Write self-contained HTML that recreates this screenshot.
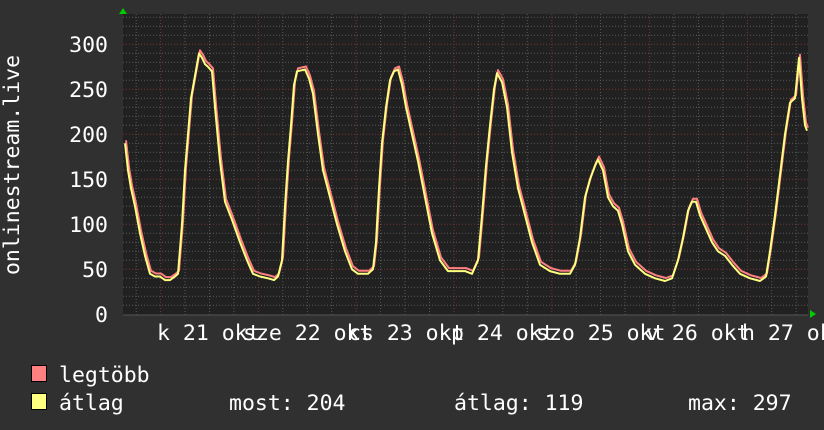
<!DOCTYPE html>
<html><head><meta charset="utf-8"><style>
html,body{margin:0;padding:0;background:#303030;width:824px;height:430px;overflow:hidden}
svg{display:block}
text{font-family:"DejaVu Sans Mono","Liberation Mono",monospace;fill:#fff;font-size:21.5px}
</style></head><body>
<svg width="824" height="430" viewBox="0 0 824 430">
<rect x="0" y="0" width="824" height="430" fill="#303030"/>
<rect x="123" y="14" width="685" height="301" fill="#212121"/>
<g stroke="#5a5a5a" stroke-width="1" stroke-dasharray="1,2">
<path d="M123 17.3H808M123 26.3H808M123 35.3H808M123 53.3H808M123 62.3H808M123 71.3H808M123 80.3H808M123 98.3H808M123 107.3H808M123 116.3H808M123 125.3H808M123 143.3H808M123 152.3H808M123 161.3H808M123 170.3H808M123 188.3H808M123 197.3H808M123 206.3H808M123 215.3H808M123 233.3H808M123 242.3H808M123 251.3H808M123 260.3H808M123 278.3H808M123 287.3H808M123 296.3H808M123 305.3H808"/>
<path d="M136.2 14V315M185 14V315M209.5 14V315M233.9 14V315M282.8 14V315M307.3 14V315M331.7 14V315M380.6 14V315M405 14V315M429.5 14V315M478.4 14V315M502.8 14V315M527.3 14V315M576.2 14V315M600.6 14V315M625 14V315M673.9 14V315M698.4 14V315M722.8 14V315M771.7 14V315M796.2 14V315"/>
</g>
<g stroke="#7a3434" stroke-width="1" stroke-dasharray="1,2">
<path d="M123 44.3H808M123 89.3H808M123 134.3H808M123 179.3H808M123 224.3H808M123 269.3H808"/>
<path d="M160.6 14V315M258.4 14V315M356.2 14V315M454 14V315M551.8 14V315M649.6 14V315M747.4 14V315"/>
</g>
<g fill="none" stroke-width="2" stroke-linejoin="round">
<polyline id="d" transform="translate(1,-3)" stroke="#ff8080" points=""/>
<polyline id="d2" stroke="#ffff80" points=""/>
</g>
<path d="M123 315H808" stroke="#555" stroke-width="1"/>
<polygon points="119,14 123,8 127,14" fill="#00cc00"/>
<polygon points="810,310 816,314 810,318" fill="#00cc00"/>
<g text-anchor="end">
<text x="108" y="52">300</text><text x="108" y="97">250</text><text x="108" y="142">200</text>
<text x="108" y="187">150</text><text x="108" y="232">100</text><text x="108" y="277">50</text><text x="108" y="322">0</text>
</g>
<text transform="translate(19,165) rotate(-90)" text-anchor="middle">onlinestream.live</text>
<g>
<text x="157" y="340">k 21 okt</text>
<text x="243" y="340">sze 22 okt</text>
<text x="348" y="340">cs 23 okt</text>
<text x="451" y="340">p 24 okt</text>
<text x="536" y="340">szo 25 okt</text>
<text x="646" y="340">v 26 okt</text>
<text x="742" y="340">h 27 okt</text>
</g>
<rect x="31.5" y="365.5" width="15" height="16" fill="#ff8080" stroke="#000"/>
<rect x="31.5" y="393.5" width="15" height="16" fill="#ffff80" stroke="#000"/>
<text x="59" y="382">legtöbb</text>
<text x="59" y="410">átlag</text>
<text x="229" y="410">most: 204</text>
<text x="454" y="410">átlag: 119</text>
<text x="688" y="410">max: 297</text>
</svg>
<script>
var p=[125,190,128,160,131,140,135,120,140,90,145,65,150,45,155,42,160,42,165,38,170,38,175,42,178,45,182,100,185,160,188,200,191,240,195,265,199,290,202,285,205,278,208,275,212,270,215,230,220,170,225,125,232,105,240,80,247,60,253,45,260,42,268,40,274,38,278,42,282,60,285,120,288,170,291,210,294,255,297,270,305,272,309,262,313,245,318,200,323,160,330,130,337,100,345,70,352,50,358,45,368,45,373,50,376,80,379,140,382,190,386,230,390,260,394,270,398,272,402,255,406,230,412,200,418,170,425,130,432,90,440,60,448,48,455,48,465,48,472,45,478,60,482,110,486,165,490,210,494,250,497,268,502,258,507,230,512,180,518,140,525,110,532,80,540,55,550,48,560,45,570,45,575,55,580,85,585,130,590,150,595,165,598,172,603,160,608,130,613,120,618,115,622,100,628,70,635,55,645,45,655,40,665,37,672,40,678,60,683,85,688,115,692,125,696,125,700,110,706,95,712,80,718,70,725,65,732,55,740,45,750,40,760,37,766,42,770,70,775,110,780,155,785,200,790,235,795,240,799,285,802,240,805,210,807,204];
var s=[];for(var i=0;i<p.length;i+=2)s.push(p[i]+','+(314.3-p[i+1]*0.9).toFixed(1));
s=s.join(' ');document.getElementById('d').setAttribute('points',s);document.getElementById('d2').setAttribute('points',s);
</script>
</body></html>
